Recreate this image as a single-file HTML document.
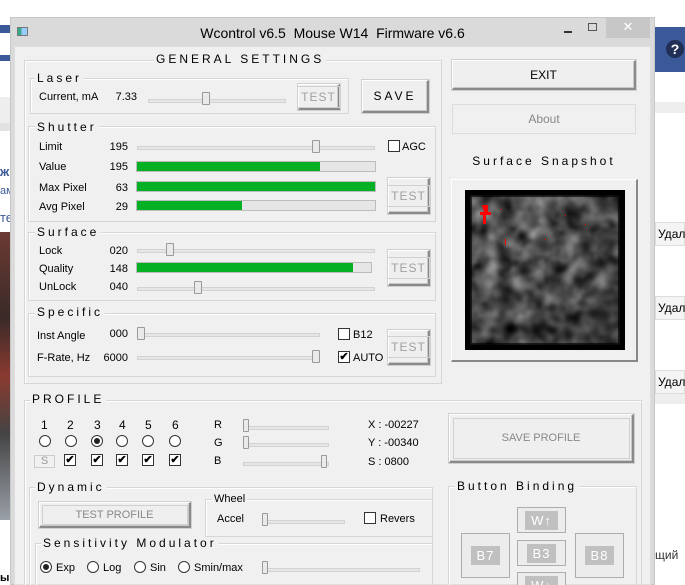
<!DOCTYPE html>
<html style="overflow:hidden;width:685px;height:585px"><head><meta charset="utf-8"><style>
*{box-sizing:border-box;margin:0;padding:0}
body{width:685px;height:585px;overflow:hidden;background:#fff;position:relative;font-family:"Liberation Sans",sans-serif;font-size:11px;color:#000}
.a{position:absolute}
.win{left:10px;top:17px;width:645px;height:568px;background:#dadada;border:1px solid #c8c8c8}
.client{left:14px;top:46px;width:637px;height:539px;background:#f0f0f0;border:1px solid #dedede}
.grp{position:absolute;border:1px solid #d6d6d6;box-shadow:inset 1px 1px 0 #fff}
.lbl{position:absolute;background:#f0f0f0;letter-spacing:3px;font-size:12px;padding:0 2px;line-height:12px}
.t{position:absolute;font-size:11px;line-height:12px;white-space:nowrap}
.r{text-align:right}
.track{position:absolute;height:4px;background:#e6e6e6;border:1px solid #d2d2d2}
.thumb{position:absolute;width:8px;height:13px;background:#eaeaea;border:1px solid #9a9a9a;border-radius:1px}
.bar{position:absolute;height:11px;background:#e6e6e6;border:1px solid #bcbcbc}
.bar i{position:absolute;left:0;top:0;bottom:0;background:#06b025}
.btn{position:absolute;background:#efefef;border:1px solid #fff;border-right:2px solid #8a8a8a;border-bottom:2px solid #8a8a8a;box-shadow:inset -1px -1px 0 #c8c8c8,0 0 0 1px #d0d0d0;display:flex;align-items:center;justify-content:center;font-size:11px}
.test{color:#a0a0a0;letter-spacing:1px;font-size:12px}
.test span{border:1px solid #d0d0d0;padding:3px 3px}
.cb{position:absolute;width:12px;height:12px;border:1px solid #333;background:#fff;font-size:11px;line-height:10px;text-align:center;font-weight:bold}
.rd{position:absolute;width:12px;height:12px;border:1px solid #333;border-radius:50%;background:#fff}
.rd.on::after{content:"";position:absolute;left:2px;top:2px;width:6px;height:6px;border-radius:50%;background:#222}
.bb{position:absolute;border:1px solid #adadad;background:#ececec;display:flex;align-items:center;justify-content:center}
.bb span{background:#c0c0c0;color:#fff;font-size:13px;padding:2px 6px;letter-spacing:1px}
</style></head><body>
<div class="a" style="left:0;top:25px;width:10px;height:8px;background:#3b5998"></div>
<div class="a" style="left:0;top:55px;width:10px;height:6px;background:#3b5998"></div>
<div class="a" style="left:0;top:97px;width:10px;height:26px;background:#eeeeee"></div>
<div class="a" style="left:0;top:123px;width:10px;height:8px;background:#e2e2e2"></div>
<div class="t" style="left:0;top:166px;color:#3b5998;font-weight:bold;font-size:13px">жі</div>
<div class="t" style="left:0;top:185px;color:#3b5998">ам</div>
<div class="t" style="left:0;top:212px;color:#3b5998;font-size:13px">те</div>
<div class="a" style="left:0;top:232px;width:10px;height:288px;background:linear-gradient(#6b3a32,#3a2a28 30%,#8a3a30 50%,#444 70%,#9aa0a8)"></div>
<div class="t" style="left:0;top:572px;font-weight:bold">ы</div>
<div class="a" style="left:655px;top:27px;width:30px;height:45px;background:#3b5998"></div>
<div class="a" style="left:666px;top:40px;width:18px;height:18px;border-radius:50%;background:#1f2f55;color:#fff;font-weight:bold;font-size:14px;text-align:center;line-height:18px">?</div>
<div class="a" style="left:655px;top:102px;width:30px;height:11px;background:#eee"></div>
<div class="a" style="left:655px;top:222px;width:30px;height:24px;background:#f4f4f4;border:1px solid #ddd;font-size:12px;padding:4px 0 0 2px">Удал</div>
<div class="a" style="left:655px;top:296px;width:30px;height:24px;background:#f4f4f4;border:1px solid #ddd;font-size:12px;padding:4px 0 0 2px">Удал</div>
<div class="a" style="left:655px;top:370px;width:30px;height:24px;background:#f4f4f4;border:1px solid #ddd;font-size:12px;padding:4px 0 0 2px">Удал</div>
<div class="a" style="left:655px;top:394px;width:30px;height:10px;background:#eee"></div>
<div class="t" style="left:655px;top:549px;font-size:12px;color:#333">щий</div>

<div class="a win"></div>
<div class="a" style="left:17px;top:27px;width:11px;height:9px;border:1px solid #777;background:linear-gradient(90deg,#3a8 40%,#9cf 40%)"></div>
<div class="t" style="left:0;width:665px;text-align:center;top:25px;font-size:14px;line-height:16px">Wcontrol v6.5&nbsp; Mouse W14&nbsp; Firmware v6.6</div>
<div class="a" style="left:564px;top:31px;width:8px;height:2px;background:#333"></div>
<div class="a" style="left:588px;top:23px;width:9px;height:8px;border:1px solid #555"></div>
<div class="a" style="left:606px;top:17px;width:44px;height:21px;background:#c7c7c7;color:#fff;font-size:13px;text-align:center;line-height:20px">✕</div>

<div class="a client"></div>

<div class="grp" style="left:24px;top:60px;width:418px;height:324px"></div>
<div class="lbl" style="left:154px;top:53px">GENERAL SETTINGS</div>
<div class="grp" style="left:30px;top:78px;width:319px;height:36px"></div>
<div class="lbl" style="left:35px;top:72px">Laser</div>
<div class="t" style="left:39px;top:91px">Current, mA</div>
<div class="t r" style="left:100px;width:37px;top:91px">7.33</div>
<div class="track" style="left:148px;top:99px;width:138px"></div>
<div class="thumb" style="left:202px;top:92px"></div>
<div class="btn test" style="left:298px;top:84px;width:42px;height:26px"><span>TEST</span></div>
<div class="btn" style="left:362px;top:80px;width:67px;height:33px;font-size:12px;letter-spacing:3px">SAVE</div>

<div class="grp" style="left:28px;top:126px;width:408px;height:96px"></div>
<div class="lbl" style="left:35px;top:121px">Shutter</div>
<div class="t" style="left:39px;top:141px">Limit</div><div class="t r" style="left:90px;width:38px;top:141px">195</div>
<div class="track" style="left:137px;top:146px;width:238px"></div><div class="thumb" style="left:312px;top:140px"></div>
<div class="cb" style="left:388px;top:140px"></div><div class="t" style="left:402px;top:141px">AGC</div>
<div class="t" style="left:39px;top:161px">Value</div><div class="t r" style="left:90px;width:38px;top:161px">195</div>
<div class="bar" style="left:136px;top:161px;width:240px"><i style="width:183px"></i></div>
<div class="t" style="left:39px;top:182px">Max Pixel</div><div class="t r" style="left:90px;width:38px;top:182px">63</div>
<div class="bar" style="left:136px;top:181px;width:240px"><i style="width:238px"></i></div>
<div class="t" style="left:39px;top:201px">Avg Pixel</div><div class="t r" style="left:90px;width:38px;top:201px">29</div>
<div class="bar" style="left:136px;top:200px;width:240px"><i style="width:105px"></i></div>
<div class="btn test" style="left:388px;top:178px;width:42px;height:36px"><span>TEST</span></div>

<div class="grp" style="left:28px;top:232px;width:408px;height:69px"></div>
<div class="lbl" style="left:35px;top:226px">Surface</div>
<div class="t" style="left:39px;top:245px">Lock</div><div class="t r" style="left:90px;width:38px;top:245px">020</div>
<div class="track" style="left:137px;top:249px;width:238px"></div><div class="thumb" style="left:166px;top:243px"></div>
<div class="t" style="left:39px;top:263px">Quality</div><div class="t r" style="left:90px;width:38px;top:263px">148</div>
<div class="bar" style="left:136px;top:262px;width:236px"><i style="width:216px"></i></div>
<div class="t" style="left:39px;top:281px">UnLock</div><div class="t r" style="left:90px;width:38px;top:281px">040</div>
<div class="track" style="left:137px;top:287px;width:238px"></div><div class="thumb" style="left:194px;top:281px"></div>
<div class="btn test" style="left:388px;top:250px;width:42px;height:36px"><span>TEST</span></div>

<div class="grp" style="left:28px;top:313px;width:408px;height:64px"></div>
<div class="lbl" style="left:35px;top:306px">Specific</div>
<div class="t" style="left:37px;top:330px">Inst Angle</div><div class="t r" style="left:90px;width:38px;top:328px">000</div>
<div class="track" style="left:137px;top:333px;width:183px"></div><div class="thumb" style="left:137px;top:327px"></div>
<div class="t" style="left:37px;top:352px">F-Rate, Hz</div><div class="t r" style="left:90px;width:38px;top:352px">6000</div>
<div class="track" style="left:137px;top:356px;width:183px"></div><div class="thumb" style="left:312px;top:350px"></div>
<div class="cb" style="left:338px;top:328px"></div><div class="t" style="left:353px;top:329px">B12</div>
<div class="cb" style="left:338px;top:351px">✔</div><div class="t" style="left:353px;top:352px">AUTO</div>
<div class="btn test" style="left:388px;top:330px;width:42px;height:35px"><span>TEST</span></div>

<div class="btn" style="left:452px;top:60px;width:184px;height:30px;font-size:12px">EXIT</div>
<div class="a" style="left:452px;top:104px;width:184px;height:30px;border:1px solid #dcdcdc;color:#888;font-size:12px;text-align:center;line-height:28px">About</div>
<div class="t" style="left:452px;width:184px;text-align:center;top:155px;font-size:12px;letter-spacing:3px">Surface Snapshot</div>
<div class="a" style="left:451px;top:179px;width:187px;height:183px;background:#f0f0f0;border:1px solid #fff;border-right:2px solid #888;border-bottom:2px solid #888"></div>
<svg class="a" style="left:465px;top:190px" width="160" height="160">
<defs>
<filter id="n" x="0" y="0" width="100%" height="100%" color-interpolation-filters="sRGB">
<feTurbulence type="fractalNoise" baseFrequency="0.06" numOctaves="3" seed="11"/>
<feColorMatrix type="matrix" values="0.75 0.75 0 0 -0.4  0.75 0.75 0 0 -0.4  0.75 0.75 0 0 -0.4  0 0 0 0 1"/>
<feGaussianBlur stdDeviation="1.5"/>
</filter>
<radialGradient id="v" cx="0.35" cy="0.3" r="0.9"><stop offset="0" stop-color="#000" stop-opacity="0"/><stop offset="1" stop-color="#000" stop-opacity="0.4"/></radialGradient>
</defs>
<rect width="160" height="160" fill="#000"/>
<rect x="5" y="5" width="150" height="150" filter="url(#n)"/>
<rect x="5" y="5" width="150" height="150" fill="url(#v)"/>
<rect x="5" y="5" width="150" height="150" fill="none" stroke="#000" stroke-width="4" opacity="0.6"/>
<path d="M17 15h6v7h3v3h-5v9h-3v-9h-3v-3h4z" fill="#f00"/>
<rect x="36" y="19" width="1" height="1" fill="#f00"/><rect x="100" y="25" width="1" height="1" fill="#f00"/><rect x="120" y="34" width="1" height="1" fill="#f00"/><rect x="40" y="49" width="1" height="6" fill="#f00"/><rect x="80" y="49" width="1" height="1" fill="#f00"/>
</svg>

<div class="grp" style="left:24px;top:400px;width:618px;height:185px;border-bottom:none"></div>
<div class="lbl" style="left:30px;top:393px">PROFILE</div>
<div class="t" style="left:41px;top:419px;font-size:12px">1</div><div class="t" style="left:67px;top:419px;font-size:12px">2</div><div class="t" style="left:94px;top:419px;font-size:12px">3</div><div class="t" style="left:119px;top:419px;font-size:12px">4</div><div class="t" style="left:145px;top:419px;font-size:12px">5</div><div class="t" style="left:172px;top:419px;font-size:12px">6</div>
<div class="rd" style="left:39px;top:435px"></div><div class="rd" style="left:65px;top:435px"></div><div class="rd on" style="left:91px;top:435px"></div><div class="rd" style="left:116px;top:435px"></div><div class="rd" style="left:142px;top:435px"></div><div class="rd" style="left:169px;top:435px"></div>
<div class="a" style="left:34px;top:455px;width:21px;height:13px;border:1px solid #ccc;color:#999;text-align:center;font-size:11px;line-height:11px">S</div>
<div class="cb" style="left:64px;top:454px">✔</div><div class="cb" style="left:91px;top:454px">✔</div><div class="cb" style="left:116px;top:454px">✔</div><div class="cb" style="left:142px;top:454px">✔</div><div class="cb" style="left:169px;top:454px">✔</div>
<div class="t" style="left:214px;top:419px">R</div><div class="t" style="left:214px;top:437px">G</div><div class="t" style="left:214px;top:455px">B</div>
<div class="track" style="left:243px;top:426px;width:86px"></div><div class="thumb" style="left:243px;top:419px;width:6px"></div>
<div class="track" style="left:243px;top:443px;width:86px"></div><div class="thumb" style="left:243px;top:436px;width:6px"></div>
<div class="track" style="left:243px;top:462px;width:86px"></div><div class="thumb" style="left:321px;top:455px;width:6px"></div>
<div class="t" style="left:368px;top:419px">X : -00227</div>
<div class="t" style="left:368px;top:437px">Y : -00340</div>
<div class="t" style="left:368px;top:456px">S : 0800</div>
<div class="btn" style="left:449px;top:414px;width:185px;height:49px;color:#888"><span style="border:1px solid #d0d0d0;width:177px;height:41px;display:flex;align-items:center;justify-content:center">SAVE PROFILE</span></div>

<div class="grp" style="left:29px;top:487px;width:404px;height:98px;border-bottom:none"></div>
<div class="lbl" style="left:35px;top:481px">Dynamic</div>
<div class="btn" style="left:39px;top:502px;width:152px;height:26px;color:#888"><span style="border:1px solid #d0d0d0;width:146px;height:20px;display:flex;align-items:center;justify-content:center">TEST PROFILE</span></div>
<div class="grp" style="left:205px;top:499px;width:228px;height:38px"></div>
<div class="t" style="left:212px;top:493px;background:#f0f0f0;padding:0 2px">Wheel</div>
<div class="t" style="left:217px;top:513px">Accel</div>
<div class="track" style="left:262px;top:520px;width:83px"></div><div class="thumb" style="left:262px;top:513px;width:6px"></div>
<div class="cb" style="left:364px;top:512px"></div><div class="t" style="left:380px;top:513px">Revers</div>
<div class="grp" style="left:35px;top:543px;width:398px;height:42px;border-bottom:none"></div>
<div class="lbl" style="left:41px;top:537px">Sensitivity Modulator</div>
<div class="rd on" style="left:40px;top:561px"></div><div class="t" style="left:56px;top:562px">Exp</div>
<div class="rd" style="left:87px;top:561px"></div><div class="t" style="left:103px;top:562px">Log</div>
<div class="rd" style="left:134px;top:561px"></div><div class="t" style="left:150px;top:562px">Sin</div>
<div class="rd" style="left:178px;top:561px"></div><div class="t" style="left:194px;top:562px">Smin/max</div>
<div class="track" style="left:262px;top:568px;width:158px"></div><div class="thumb" style="left:262px;top:561px;width:6px"></div>

<div class="grp" style="left:448px;top:486px;width:189px;height:99px;border-bottom:none"></div>
<div class="lbl" style="left:455px;top:480px">Button Binding</div>
<div class="bb" style="left:517px;top:507px;width:49px;height:26px"><span>W↑</span></div>
<div class="bb" style="left:461px;top:533px;width:49px;height:45px"><span>B7</span></div>
<div class="bb" style="left:517px;top:540px;width:49px;height:26px"><span>B3</span></div>
<div class="bb" style="left:575px;top:533px;width:49px;height:45px"><span>B8</span></div>
<div class="bb" style="left:517px;top:572px;width:49px;height:13px;border-bottom:none;overflow:hidden;align-items:flex-start;padding-top:3px"><span>W↓</span></div>
</body></html>
